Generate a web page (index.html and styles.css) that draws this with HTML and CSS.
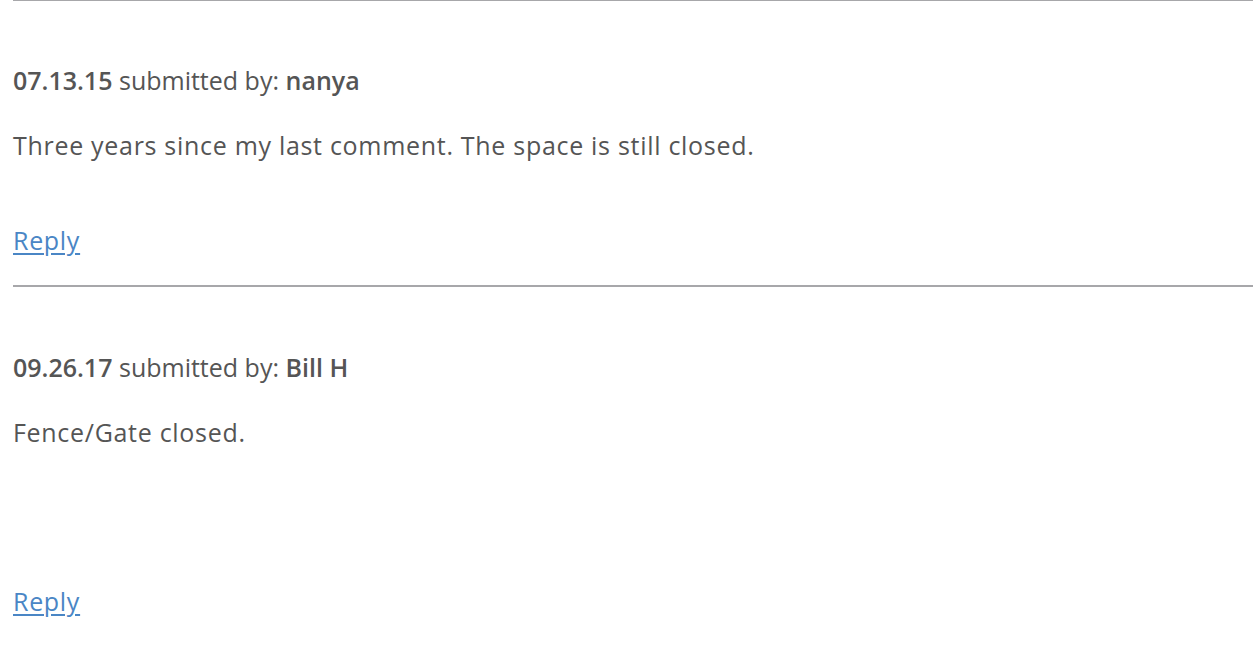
FILE: index.html
```html
<!DOCTYPE html>
<html>
<head>
<meta charset="utf-8">
<link rel="stylesheet" href="styles.css">
</head>
<body>
<div class="comments">
  <div class="comment">
    <div class="meta"><strong>07.13.15</strong> submitted by: <strong>nanya</strong></div>
    <div class="body">Three years since my last comment. The space is still closed.</div>
    <div class="actions"><a href="#" class="reply">Reply</a></div>
  </div>
  <div class="comment">
    <div class="meta"><strong>09.26.17</strong> submitted by: <strong>Bill H</strong></div>
    <div class="body body-tall">Fence/Gate closed.</div>
    <div class="actions"><a href="#" class="reply">Reply</a></div>
  </div>
</div>
</body>
</html>
```
FILE: styles.css
```css
html, body {
  margin: 0;
  padding: 0;
  background: #fff;
}
body {
  font-family: "Open Sans", Lato, sans-serif;
  color: #555;
  font-size: 25px;
}
.comments {
  padding: 0 5px 0 13px;
}
.comment {
  border-top: 2px solid #a7a7aa;
}
.comments .comment:first-child {
  margin-top: -1px;
}
.meta {
  line-height: 30px;
  margin-top: 64px;
  letter-spacing: 0;
}
.comment + .comment .meta {
  margin-top: 65px;
}
.meta strong {
  font-weight: 600;
}
.body {
  line-height: 30px;
  margin-top: 35px;
  letter-spacing: 0.7px;
}
.body-tall {
  min-height: 30px;
}
.actions {
  margin-top: 65px;
  line-height: 30px;
  padding-bottom: 30px;
  letter-spacing: 0.7px;
}
.comment + .comment .actions {
  margin-top: 139px;
}
.reply {
  color: #4a86c5;
  text-decoration: underline;
  text-underline-offset: 3px;
}
```
